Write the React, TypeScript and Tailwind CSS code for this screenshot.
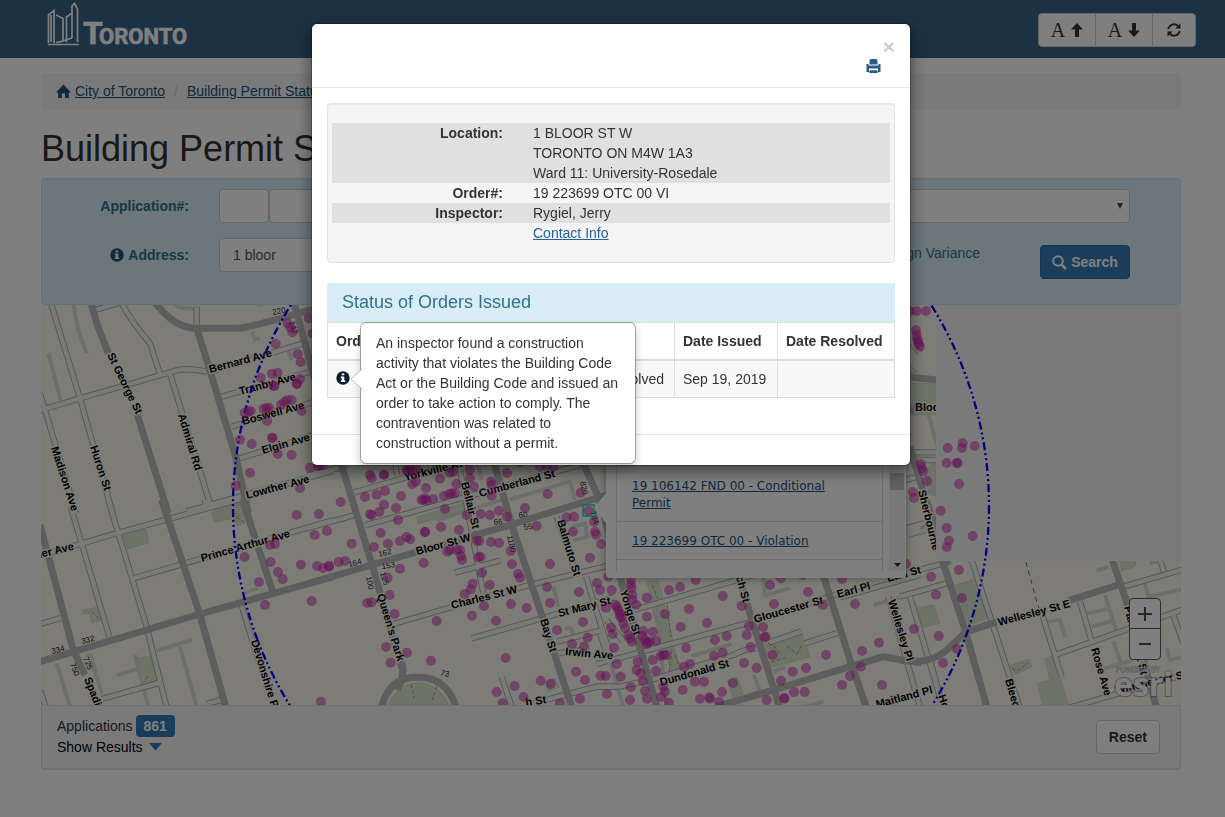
import React from "react";

type Tile = { x: number; y: number; major: string; minor: string; alley: string; park: string; dots: string };

/* Every map tile is drawn on a 3x grid, with its own origin on the canvas. */
const TILES: Tile[] = [
  {
    x: 40,
    y: 300,
    major:
      "M150 0L172 75L205 160M292 345L385 640M340 0Q400 85 470 85H590Q640 82 870 12M470 85L505 195L590 480L625 640M760 0L822 230L870 400",
    minor:
      "M-10 334L120 295L260 255L410 211Q440 203 500 215M30 0L120 295L218 640M0 280L108 640M240 0Q270 60 330 130L360 222M165 30L250 5M390 220L512 618M510 215L790 130M545 290L820 213M575 380L830 303M600 475L830 402M440 634L880 512M470 20V90",
    alley: "M25 160L62 300M100 10Q110 90 140 160M635 95L645 118L660 115M745 150L755 180M405 15Q430 30 480 25M650 15L680 10",
    park: "M520 625L600 603L605 640H520Z",
    dots: "743,70 751,82 757,97 707,131 773,162 782,186 662,233 696,221 713,218 780,237 770,251 771,252 703,258 701,257 614,338 632,333 625,335 671,326 680,324 688,324 723,314 742,300 755,300 733,306 785,333 681,363 600,419 635,432 696,413 698,414 713,462 755,465 630,518 587,557 780,564 810,503 835,497 848,495 806,55 818,100",
  },
  {
    x: 40,
    y: 500,
    major: "M0 75L100 450L135 525M-10 488L470 345L880 230M365 0L480 345L560 630M608 0L698 275",
    minor:
      "M-10 170L240 97L600 -2M92 20L208 410M205 0L320 380L382 630M278 236L880 60M495 0L500 20M-10 375L62 354M185 597L360 548M600 300L655 480M0 570L20 630M500 612L550 598",
    alley: "M350 452L455 420M420 440L470 620M230 525L300 505M285 465L325 620M50 490L90 620",
    park: "M250 105L318 87L327 128L262 147ZM515 40L590 15L605 20L615 70L590 75L580 55L522 66ZM130 330L170 322L185 362L155 370L150 340L132 342ZM295 475L330 468L352 540L318 550ZM140 462L155 460L188 580H184ZM610 275L650 262L655 268L612 282Z",
    dots: "770,45 690,135 705,132 614,171 692,186 714,216 728,237 657,246 783,194 675,315",
  },
  {
    x: 310,
    y: 460,
    major: "M90 0L185 310L280 640M-10 372L185 315L600 195L900 102M550 0L605 195L700 480L785 740M815 0L865 110L905 240M215 740Q240 645 330 652Q410 655 438 740M262 690Q285 640 275 605",
    minor:
      "M130 98L450 5M-10 47L110 18M165 196L820 12M-10 205L135 165M255 10L262 45M450 30L520 400M435 338L570 302M250 492L620 385L910 313M485 535L820 440L910 412M740 170L800 345M828 350L905 600M742 545L885 508M740 580L820 570M650 735L860 680L910 680M575 650L605 740",
    alley: "M600 118L780 65L795 120M380 180L590 115M788 200L825 190L832 230L790 242M730 380L745 440M765 505H782L790 525M500 0L515 60",
    park: "M320 170L460 130L470 150L325 192ZM232 740Q260 668 330 668Q390 672 420 740ZM708 665L735 655L748 682L715 694Z",
    dots: "180,45 185,55 222,44 222,44 290,30 293,34 300,25 310,35 320,25 307,72 318,65 348,84 390,56 420,38 430,35 440,72 480,30 480,55 492,80 543,65 545,75 545,107 591,39 630,5 690,20 710,18 730,20 165,111 200,104 225,93 273,108 258,144 222,134 208,156 180,163 185,165 264,180 27,162 92,126 14,225 51,213 125,251 335,120 345,115 350,122 340,120 370,117 402,108 418,102 425,100 435,100 405,147 470,165 512,162 540,165 567,152 591,170 645,144 680,198 713,102 812,98 835,152 852,185 855,215 858,224 873,252 789,215 770,172 792,170 212,219 234,251 192,261 270,243 290,231 300,238 345,216 345,216 393,201 447,210 21,318 39,324 57,317 57,320 86,306 105,303 270,326 341,309 233,353 239,405 172,429 185,427 254,462 228,561 291,578 242,608 363,602 33,725 5,423 380,483 486,467 522,438 558,482 603,432 650,444 464,402 483,388 488,371 539,375 516,338 412,275 420,270 440,270 450,270 453,288 456,300 505,292 512,290 500,242 508,243 543,246 567,249 602,273 606,312 624,341 630,353 720,312 840,293 711,381 720,429 741,510 807,396 819,486 786,552 833,533 822,560 861,369 870,390 888,443 587,594 560,696 614,678 641,711 578,730 692,662 722,671 798,635 825,660 872,647 887,648 810,716 750,730 891,702 25,18",
  },
  {
    x: 600,
    y: 460,
    major: "M0 120L60 350L110 530L172 745M400 290L440 430L540 745M668 340L750 600L800 745M350 740L520 690L750 620L850 590Q900 600 965 608",
    minor:
      "M60 462L480 340M-10 612L440 490L720 400M500 550L605 514M615 550L715 518M720 412L960 345M865 410L960 740M-10 680L60 680L170 655L400 585Q430 568 470 565M918 60L960 48M918 215L960 200M0 520L30 610M20 480L70 545",
    alley: "M275 588L395 552M490 345L495 405L570 385M462 645L478 690M520 635L555 622M600 745L670 725M150 400L175 500L200 740M820 435L900 412M30 600L70 740",
    park: "M140 365L175 360L240 630L215 640ZM490 555L605 520L630 590L515 622ZM382 660L410 652L430 700L398 712Z",
    dots: "25,350 35,390 93,360 93,375 95,385 97,405 97,420 108,434 46,434 50,440 55,450 60,460 65,475 60,468 70,490 75,505 85,525 90,535 95,545 33,503 38,522 42,563 50,612 62,650 90,720 92,682 113,605 110,630 122,640 128,663 135,693 141,716 168,633 141,470 140,413 195,462 207,390 240,381 287,360 267,447 242,501 321,489 368,408 425,438 447,498 489,501 440,525 380,528 345,540 452,561 493,532 497,530 518,585 258,564 130,513 158,515 128,528 135,540 142,548 150,545 140,552 168,542 158,600 182,588 190,585 198,585 252,620 270,612 342,588 368,578 432,609 470,624 285,665 312,665 248,690 195,695 190,680 183,711 207,728 300,716 328,712 330,716 366,696 357,725 399,669 500,720 543,662 578,635 618,624 582,696 614,696 553,716 553,714 510,375 543,355 522,432 624,396 669,435 608,345 726,357 765,432 678,585 786,573 837,548 783,620 750,648 726,675 846,675 918,312",
  },
  {
    x: 900,
    y: 300,
    major: "M0 227L115 241M0 330H40M30 440L68 570L145 795",
    minor: "M20 457H115M20 480H110M18 540L38 532M20 684L80 668L115 660M20 706L75 690M30 120L60 160",
    alley: "M85 342L112 440",
    park: "M0 248L115 252V345H20ZM20 190L55 215L30 222ZM75 510L105 482L110 590L85 580Z",
    dots: "30,33 50,33 78,33 48,90 50,104 53,118 54,126 56,133 60,140 143,444 188,429 186,444 224,438 140,489 170,489 173,489 177,552 122,632 140,684 218,708 147,722 140,741 62,492 66,505 69,514 81,543 39,576 42,594",
  },
  {
    x: 900,
    y: 550,
    major: "M125 25L195 240L262 475M0 330Q90 345 140 300L200 245L290 216M505 152L655 105M635 25L690 185L770 475",
    minor:
      "M0 75L140 38M0 140L140 100M30 140L130 475M215 30L360 475M427 195L485 380M540 155L577 280M465 315L850 178M670 110L850 58M500 475L850 375M780 30L792 65M818 190L850 280M90 330L115 420",
    alley: "M440 215L480 210L495 262M560 190L630 175M575 230L640 212M615 135L652 250M640 275L665 345M735 100L745 140L850 118M800 295L810 330L850 320M590 62L625 50M750 40L780 30M600 360L700 330",
    park: "M165 105L225 88L262 205L205 225ZM50 175L100 165L120 220L70 232ZM330 345L390 328L395 350L345 375ZM435 325L455 320L480 380L508 475H430L412 400L450 390ZM660 35H708L705 50L665 62Z",
    dots: "177,60 93,80 108,134 186,144 42,237 116,258 171,297 129,339",
  },
];

const LABELS: [string, number, number, number][] = [
  ["St George St", 107, 355, 64],
  ["Madison Ave", 51, 448, 72],
  ["Huron St", 90, 447, 72],
  ["Admiral Rd", 178, 415, 73],
  ["Bernard Ave", 210, 373, -15],
  ["Tranby Ave", 240, 395, -15],
  ["Boswell Ave", 243, 425, -15],
  ["Elgin Ave", 263, 454, -16],
  ["Lowther Ave", 247, 499, -15],
  ["Prince Arthur Ave", 202, 562, -16],
  ["ner Ave", 36, 559, -14],
  ["Spadina", 84, 679, 68],
  ["Devonshire Pl", 251, 641, 73],
  ["Yorkville Ave", 405, 481, -14],
  ["Cumberland St", 480, 497, -15],
  ["Bellair St", 461, 483, 76],
  ["Bloor St W", 417, 555, -15],
  ["Charles St W", 452, 609, -14],
  ["Balmuto St", 557, 521, 73],
  ["St Mary St", 559, 617, -14],
  ["Queen's Park", 377, 595, 73],
  ["Bay St", 540, 620, 73],
  ["Irwin Ave", 565, 655, 5],
  ["h St", 526, 706, -8],
  ["Yonge St", 620, 591, 73],
  ["ch St", 736, 577, 75],
  ["Gloucester St", 755, 623, -16],
  ["Dundonald St", 661, 686, -16],
  ["Earl Pl", 838, 598, -15],
  ["Wellesley Pl", 888, 601, 73],
  ["Maitland Pl", 877, 708, -15],
  ["Earl St", 888, 582, -15],
  ["Wellesley St E", 999, 626, -15],
  ["Rose Ave", 1091, 649, 74],
  ["Bleecker", 1005, 680, 74],
  ["Ho", 938, 696, 72],
  ["Parliament St", 1124, 607, 76],
  ["Winchester St", 1116, 694, -13],
  ["Sherbourne", 918, 491, 76],
  ["Bloor", 915, 411, 0],
];

const NUMBERS: [string, number, number, number][] = [
  ["220", 273, 315, -12],
  ["142", 289, 322, 72],
  ["332", 82, 644, -14],
  ["334", 52, 654, -14],
  ["725", 83, 658, 68],
  ["750", 70, 664, 70],
  ["164", 349, 567, -14],
  ["162", 379, 557, -14],
  ["153", 382, 569, -8],
  ["125", 380, 573, 72],
  ["100", 366, 577, 78],
  ["66", 494, 525, -8],
  ["60", 519, 518, -8],
  ["55", 524, 530, -8],
  ["1180", 507, 536, 78],
  ["820", 580, 482, 78],
  ["784", 590, 512, 72],
  ["73", 440, 675, 14],
];

function MapCanvas() {
  const at = (t: Tile) => `translate(${t.x} ${t.y}) scale(0.33333)`;
  return (
    <svg viewBox="41 305 1140 400" preserveAspectRatio="xMinYMin slice" className="block h-[400px] w-full" role="img" aria-label="Map of permits">
      <rect x="41" y="305" width="1140" height="400" fill="#faf9ee" />
      <g fill="#dbe6cd" stroke="#c9d6b8" strokeWidth="2">
        {TILES.map((t, i) => <path key={i} d={t.park} transform={at(t)} />)}
      </g>
      <g fill="none" stroke="#dadad8" strokeWidth="12">
        {TILES.map((t, i) => <path key={i} d={t.alley} transform={at(t)} />)}
      </g>
      <g fill="none" stroke="#b0b0b0" strokeWidth="19" strokeLinejoin="round">
        {TILES.map((t, i) => <path key={i} d={t.minor} transform={at(t)} />)}
      </g>
      <g fill="none" stroke="#f4f4ee" strokeWidth="13" strokeLinejoin="round">
        {TILES.map((t, i) => <path key={i} d={t.minor} transform={at(t)} />)}
      </g>
      <g fill="none" stroke="#bababa" strokeWidth="21" strokeLinejoin="round">
        {TILES.map((t, i) => <path key={i} d={t.major} transform={at(t)} />)}
      </g>
      <g fill="none" stroke="#a98f3a" strokeWidth="0.8" strokeDasharray="4 2">
        <path d="M768 643l8 5l4 6M787 646l10 8l5 -9M771 662l14 -4M652 585l6 14M667 605l4 32M672 650l-3 22M675 655l8 18M411 684l3 14M437 686l-5 14M1012 668l5 3l11 -8M92 612l8 8M148 676l-4 6M233 512l6 5M236 517l8 5" />
      </g>
      <path d="M1026 562l10 37l3 9" fill="none" stroke="#6f6f6f" strokeWidth="1" strokeDasharray="5 4" />
      <g fontFamily="'Liberation Sans', sans-serif" fill="#000" stroke="#faf9ee" strokeWidth="3" strokeLinejoin="round" paintOrder="stroke">
        {LABELS.map(([s, x, y, r]) => (
          <text key={s} fontSize="11" fontWeight="700" transform={`translate(${x} ${y}) rotate(${r})`}>{s}</text>
        ))}
        {NUMBERS.map(([s, x, y, r]) => (
          <text key={s} fontSize="8" strokeWidth="1" fill="#222" transform={`translate(${x} ${y}) rotate(${r})`}>{s}</text>
        ))}
      </g>
      <rect x="936" y="305" width="245" height="256" fill="#f5f5f5" />
      <circle cx="611" cy="506" r="378" fill="none" stroke="#0000ff" strokeWidth="2.3" strokeDasharray="8 3 2 3 2 3" />
      <g fill="#cc1ea8" fillOpacity="0.5">
        {TILES.map((t, i) => (
          <g key={i} transform={at(t)}>
            {t.dots.split(" ").map((p, j) => {
              const [x, y] = p.split(",");
              return <circle key={j} cx={x} cy={y} r="15" />;
            })}
          </g>
        ))}
      </g>
      <rect x="583" y="505" width="11" height="11" fill="none" stroke="#00e0e0" strokeWidth="1.5" />
    </svg>
  );
}

function InfoIcon({ className }: { className: string }) {
  return (
    <svg viewBox="0 0 14 14" className={className} aria-hidden="true">
      <circle cx="7" cy="7" r="6.7" fill="currentColor" />
      <path d="M5.7 2.4h2.6v1.9H5.7zM4.8 5.5h3.5v4h1v1.4H4.8V9.5h.9V6.9h-.9z" fill="#fff" />
    </svg>
  );
}

function TorontoLogo() {
  return (
    <svg viewBox="0 0 146 48" className="h-12 w-[146px]" role="img" aria-label="Toronto">
      <g fill="none" stroke="#fff" strokeWidth="1.7">
        <path d="M2.5 43V15L8 10.500V43M5 42V15M10 15L17 18.500V41L10 42.500M20.500 42V17L26 13V38M26 14V6L28.500 3.500L31.500 9V42M2 44.500H33M12 42.500L26 38" />
      </g>
      <g fill="#fff" stroke="#fff" strokeWidth="0.6" fontFamily="Roboto, sans-serif" fontWeight="700">
        <text x="37" y="44" fontSize="32">T</text>
        <text x="53" y="44" fontSize="22">ORONTO</text>
      </g>
    </svg>
  );
}

function SizeArrow({ down }: { down?: boolean }) {
  return (
    <svg viewBox="0 0 12 14" className="h-3.5 w-3" aria-hidden="true">
      <path d={down ? "M4 0h4v7.500h4L6 14L0 7.500h4z" : "M4 14h4V6.500h4L6 0L0 6.500h4z"} fill="#333" />
    </svg>
  );
}

const field = "h-[34px] rounded border border-[#ccc] bg-white px-[13px] text-[14px] text-[#555]";

function DetailRow({ label, striped, children }: { label: string; striped?: boolean; children: React.ReactNode }) {
  return (
    <div className={striped ? "flex bg-[#e0e0e0]" : "flex"}>
      <dt className="w-1/3 px-[15px] text-right font-bold">{label}</dt>
      <dd className="flex-1 px-[15px]">{children}</dd>
    </div>
  );
}

export default function App() {
  return (
    <div className="min-h-screen bg-white font-['Liberation_Sans',Arial,sans-serif] text-[14px] leading-5 text-[#333]">
      <header className="flex h-[58px] items-start justify-between bg-[#386489] pr-[29px] pl-[46px]">
        <a href="#top" aria-label="Toronto"><TorontoLogo /></a>
        <div className="mt-[13px] flex h-[34px] divide-x divide-[#ccc] overflow-hidden rounded border border-[#ccc] bg-white">
          <button aria-label="Increase text size" className="flex w-[57px] items-center justify-center gap-1.5 font-['Liberation_Serif',serif] text-[20px]">A<SizeArrow /></button>
          <button aria-label="Decrease text size" className="flex w-[57px] items-center justify-center gap-1.5 font-['Liberation_Serif',serif] text-[20px]">A<SizeArrow down /></button>
          <button aria-label="Reset text size" className="flex w-[42px] items-center justify-center">
            <svg viewBox="0 0 14 14" className="size-3.5" aria-hidden="true">
              <path d="M1.300 6.200A5.700 5.700 0 0 1 11 3M12.700 7.800A5.700 5.700 0 0 1 3 11" fill="none" stroke="#333" strokeWidth="1.800" />
              <path d="M13.500 0.300V5.500H8.300zM0.500 13.700V8.500H5.700z" fill="#333" />
            </svg>
          </button>
        </div>
      </header>

      <div className="pr-[3px]">
        <main className="mx-auto w-full max-w-[1140px] pt-[15px]">
          <nav className="flex h-9 items-center rounded bg-[#f5f5f5] px-[15px] text-[#23527c]">
            <svg viewBox="0 0 16 15" className="mr-1 size-[15px]" aria-hidden="true">
              <path d="M8 0L16 8.500H13.700V14.500H9.700V9.500H6.300V14.500H2.300V8.500H0z" fill="#23527c" />
            </svg>
            <a href="#city" className="underline">City of Toronto</a>
            <span className="px-[9px] text-[#ccc]">/</span>
            <a href="#status" className="underline">Building Permit Status</a>
          </nav>
          <h1 className="mt-5 mb-[9px] text-[36px] leading-10 text-[#333]">Building Permit Status</h1>

          <form className="flex h-[127px] flex-col gap-[15px] rounded border border-[#bce8f1] bg-[#d9edf7] pt-2.5 pr-[50px] text-[#31708f]">
            <div className="flex items-center">
              <label htmlFor="app-year" className="mr-[30px] w-[147px] text-right font-bold">Application#:</label>
              <input id="app-year" className={`${field} w-[50px]`} />
              <input aria-label="Application sequence" className={`${field} w-[120px]`} />
              <div className="relative ml-4 flex-1">
                <select aria-label="Application type" className={`${field} w-full appearance-none`}><option></option></select>
                <svg viewBox="0 0 6 6" className="pointer-events-none absolute top-3.5 right-[7px] size-1.5" aria-hidden="true">
                  <path d="M0 0H6L3 6z" fill="#444" />
                </svg>
              </div>
            </div>
            <div className="flex items-start">
              <label htmlFor="address" className="mr-[30px] flex h-[34px] w-[147px] items-center justify-end gap-1 font-bold">
                <InfoIcon className="size-3.5 text-[#23527c]" />Address:
              </label>
              <input id="address" defaultValue="1 bloor" className={`${field} w-[360px]`} />
              <label className="ml-auto flex h-[30px] items-center gap-1"><input type="checkbox" />Sign Variance</label>
              <button type="button" className="mt-[7px] ml-[60px] flex h-[34px] w-[90px] items-center justify-center gap-1 rounded border border-[#2e6da4] bg-[#337ab7] font-bold text-white">
                <svg viewBox="0 0 15 15" className="size-[15px]" aria-hidden="true">
                  <circle cx="6" cy="6" r="4.800" fill="none" stroke="#fff" strokeWidth="2" />
                  <path d="M9.300 9.300L14 14" stroke="#fff" strokeWidth="2.600" />
                </svg>
                Search
              </button>
            </div>
          </form>

          <section className="relative h-[400px] overflow-hidden">
            <MapCanvas />
            <div className="absolute top-[100px] left-[565px] h-[173px] w-[300px] rounded bg-white shadow-[0_0_8px_rgba(0,0,0,0.4)]">
              <svg viewBox="0 0 12 30" className="absolute top-[88px] -left-3 h-[30px] w-3" aria-hidden="true"><path d="M12 0L0 15L12 30z" fill="#fff" /></svg>
              <div className="flex h-[166px] font-['DejaVu_Sans',sans-serif] text-[12px] leading-[17px] text-[#23527c]">
                <ul className="ml-2.5 w-[267px] overflow-hidden border-x border-[#ddd] pt-[60px]">
                  <li className="border-t border-[#ddd] px-[15px] pt-3 pb-[9px]"><a href="#p1" className="underline">19 106142 FND 00 - Conditional Permit</a></li>
                  <li className="border-t border-[#ddd] px-[15px] pt-[11px] pb-[9px]"><a href="#p2" className="underline">19 223699 OTC 00 - Violation</a></li>
                  <li className="h-5 border-t border-[#ddd]" />
                </ul>
                <div className="ml-1.5 flex w-4 flex-col items-center justify-between bg-[#f1f1f1] pt-[68px] pb-1">
                  <div className="h-[17px] w-3.5 bg-[#c1c1c1]" />
                  <svg viewBox="0 0 7 4" className="h-1 w-[7px]" aria-hidden="true"><path d="M0 0h7L3.500 4z" fill="#333" /></svg>
                </div>
              </div>
            </div>
            <div className="absolute top-[293px] right-5 flex w-8 flex-col divide-y divide-[#57585a] overflow-hidden rounded border border-[#57585a] bg-white text-[#4c4c4c]">
              <button aria-label="Zoom in" className="flex h-[30px] items-center justify-center"><svg viewBox="0 0 14 14" className="size-3.5"><path d="M7 0v14M0 7h14" stroke="currentColor" strokeWidth="2" /></svg></button>
              <button aria-label="Zoom out" className="flex h-[30px] items-center justify-center"><svg viewBox="0 0 14 14" className="size-3.5"><path d="M1 7h12" stroke="currentColor" strokeWidth="2" /></svg></button>
            </div>
            <svg viewBox="0 0 64 42" className="absolute right-1 bottom-0 h-[42px] w-16" aria-label="Powered by Esri">
              <g fontFamily="'Open Sans', sans-serif" fill="#fff" stroke="#777" strokeOpacity="0.6" paintOrder="stroke">
                <text x="3" y="9" fontSize="7" strokeWidth="1">POWERED BY</text>
                <text x="1" y="33" fontSize="32" fontWeight="700" strokeWidth="2">esri</text>
              </g>
            </svg>
          </section>

          <section className="flex justify-between rounded-b border border-[#ddd] bg-[#f5f5f5] pt-[9px] pr-5 pb-[11px] pl-[15px] shadow-[0_1px_1px_rgba(0,0,0,0.15)]">
            <div>
              <div className="flex items-center gap-[3px]">Applications <span className="rounded bg-[#337ab7] px-2 leading-[22px] font-bold text-white">861</span></div>
              <button className="flex items-center gap-1.5 text-black">Show Results
                <svg viewBox="0 0 13 8" className="h-2 w-[13px]" aria-hidden="true"><path d="M0 0h13L6.500 7.500z" fill="#337ab7" /></svg>
              </button>
            </div>
            <button className="mt-[5px] h-[34px] rounded border border-[#ccc] bg-white px-3 font-bold">Reset</button>
          </section>
        </main>
      </div>

      <div className="fixed inset-0 bg-black/50" />

      <div className="fixed inset-0 flex items-start justify-center pt-[23px] pr-[3px]">
        <div role="dialog" aria-modal="true" aria-label="Order details" className="relative w-[600px] rounded-md border border-black/20 bg-white bg-clip-padding shadow-[0_5px_15px_rgba(0,0,0,0.5)]">
          <header className="flex h-16 flex-col items-end border-b border-[#e5e5e5] px-[15px] pt-3">
            <button aria-label="Close" className="text-[21px] leading-[21px] font-bold text-black opacity-20">×</button>
            <button aria-label="Print" className="mt-0.5 mr-3.5">
              <svg viewBox="0 0 15 14" className="h-3.5 w-[15px]" aria-hidden="true">
                <path d="M4.500 0h6l1 1.500V5.500h-8V1.500zM.5 5h2v1.500h10V5h2v8H12V9.500H3V13H.5zM4 11.200h7l.8 1V14H3.200v-1.800z" fill="#2a5b8a" />
              </svg>
            </button>
          </header>
          <div className="p-[15px] pb-9">
            <dl className="mb-5 rounded border border-[#e3e3e3] bg-[#f5f5f5] px-1 py-[19px] shadow-[inset_0_1px_1px_rgba(0,0,0,0.05)]">
              <DetailRow label="Location:" striped>1 BLOOR ST W<br />TORONTO ON M4W 1A3<br />Ward 11: University-Rosedale</DetailRow>
              <DetailRow label="Order#:">19 223699 OTC 00 VI</DetailRow>
              <DetailRow label="Inspector:" striped>Rygiel, Jerry</DetailRow>
              <DetailRow label=""><a href="#contact" className="text-[#23619a] underline">Contact Info</a></DetailRow>
            </dl>
            <h2 className="h-[39px] bg-[#d9edf7] px-[15px] text-[18px] leading-[38px] text-[#31708f]">Status of Orders Issued</h2>
            <table className="w-full table-fixed border-collapse text-left [&_td]:border [&_td]:border-[#ddd] [&_td]:px-2 [&_th]:border [&_th]:border-[#ddd] [&_th]:px-2">
              <colgroup><col /><col className="w-[103px]" /><col className="w-[103px]" /><col className="w-[117px]" /></colgroup>
              <thead>
                <tr className="h-[37px] border-b-2 border-[#ddd]"><th>Order Type</th><th>Status</th><th>Date Issued</th><th>Date Resolved</th></tr>
              </thead>
              <tbody>
                <tr className="h-[38px] bg-[#f9f9f9]">
                  <td><InfoIcon className="inline size-3.5 align-[-1px] text-[#0c1c2b]" /> Order to Comply</td>
                  <td className="whitespace-nowrap">Not Resolved</td>
                  <td>Sep 19, 2019</td>
                  <td />
                </tr>
              </tbody>
            </table>
          </div>
          <footer className="h-[31px] border-t border-[#e5e5e5]" />

          <div role="tooltip" className="absolute top-[298px] left-12 w-[276px] rounded-md border border-black/30 bg-white bg-clip-padding px-[15px] py-2.5 shadow-[0_5px_10px_rgba(0,0,0,0.2)]">
            <svg viewBox="0 0 12 22" className="absolute top-[45px] -left-[11px] h-[22px] w-3" aria-hidden="true">
              <path d="M12 1L1 11L12 21" fill="#fff" stroke="#bbb" />
            </svg>
            An inspector found a construction activity that violates the Building Code Act or the Building Code and issued an order to take action to comply. The contravention was related to construction without a permit.
          </div>
        </div>
      </div>
    </div>
  );
}
